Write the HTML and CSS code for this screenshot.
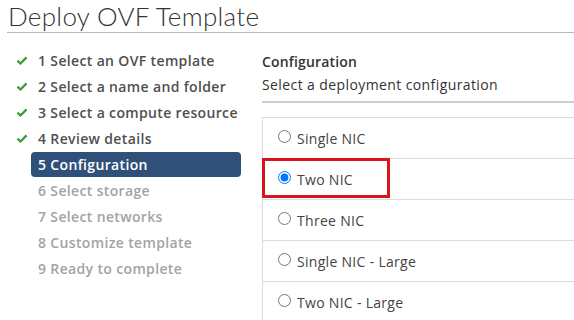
FILE: index.html
```html
<!DOCTYPE html>
<html lang="en">
<head>
  <meta charset="UTF-8" />
  <meta name="viewport" content="width=device-width, initial-scale=1.0" />
  <title>Deploy OVF Template</title>
  <link rel="stylesheet" href="styles.css">
</head>
<body>

  <div class="page">
    <h1 class="title">Deploy OVF Template</h1>

    <div class="wizard">
      <ul class="steps">
        <li class="step done">
          <svg class="check" viewBox="0 0 12 10"><path d="M1 5.2 L4.3 8.3 L11 1.5" /></svg>
          <span class="step-label">1 Select an OVF template</span>
        </li>
        <li class="step done">
          <svg class="check" viewBox="0 0 12 10"><path d="M1 5.2 L4.3 8.3 L11 1.5" /></svg>
          <span class="step-label">2 Select a name and folder</span>
        </li>
        <li class="step done">
          <svg class="check" viewBox="0 0 12 10"><path d="M1 5.2 L4.3 8.3 L11 1.5" /></svg>
          <span class="step-label">3 Select a compute resource</span>
        </li>
        <li class="step done">
          <svg class="check" viewBox="0 0 12 10"><path d="M1 5.2 L4.3 8.3 L11 1.5" /></svg>
          <span class="step-label">4 Review details</span>
        </li>
        <li class="step current">
          <span class="step-label">5 Configuration</span>
        </li>
        <li class="step">
          <span class="step-label">6 Select storage</span>
        </li>
        <li class="step">
          <span class="step-label">7 Select networks</span>
        </li>
        <li class="step">
          <span class="step-label">8 Customize template</span>
        </li>
        <li class="step">
          <span class="step-label">9 Ready to complete</span>
        </li>
      </ul>

      <div class="content">
        <h2 class="content-title">Configuration</h2>
        <p class="content-sub">Select a deployment configuration</p>

        <div class="options">
          <label class="option">
            <input type="radio" name="config">
            <span>Single NIC</span>
          </label>
          <label class="option">
            <input type="radio" name="config" checked>
            <span>Two NIC</span>
            <span class="marker"></span>
          </label>
          <label class="option">
            <input type="radio" name="config">
            <span>Three NIC</span>
          </label>
          <label class="option">
            <input type="radio" name="config">
            <span>Single NIC - Large</span>
          </label>
          <label class="option">
            <input type="radio" name="config">
            <span>Two NIC - Large</span>
          </label>
        </div>
      </div>
    </div>
  </div>

</body>
</html>
```

FILE: styles.css
```css
html, body {
  margin: 0;
  padding: 0;
  overflow: hidden;
}

body {
  font-family: "Open Sans", Arial, sans-serif;
  background: #fff;
  color: #565656;
}

.page {
  padding-left: 7px;
}

.title {
  margin: 0;
  padding: 0 0 0 1px;
  height: 32px;
  font-family: Lato, "Open Sans", sans-serif;
  font-size: 26px;
  font-weight: 300;
  line-height: 32px;
  letter-spacing: 0.3px;
  color: #333;
  white-space: nowrap;
  border-bottom: 1px solid #b8b8b8;
}

.wizard {
  display: flex;
  padding-top: 14px;
}

/* Steps */
.steps {
  list-style: none;
  margin: 0;
  padding: 0;
  width: 234px;
  margin-right: 21px;
  flex-shrink: 0;
}

.step {
  display: flex;
  align-items: center;
  height: 26px;
  padding-left: 24px;
  position: relative;
  font-size: 14px;
  font-weight: 600;
  letter-spacing: 0.35px;
  color: #a3a3a3;
}

.step.done {
  color: #4f4f4f;
}

.check {
  position: absolute;
  left: 9px;
  top: 9px;
  width: 12px;
  height: 9px;
  fill: none;
  stroke: #3d9a3a;
  stroke-width: 2.5;
}

.step-label {
  flex: 1;
  height: 25px;
  line-height: 25px;
  padding: 0 7px;
  border-radius: 4px;
  white-space: nowrap;
}

.step.current .step-label {
  background: #2f5179;
  color: #fff;
}

/* Content */
.content {
  flex: 1;
  min-width: 0;
}

.content-title {
  margin: 5px 0 0;
  font-size: 14px;
  font-weight: 600;
  line-height: 20px;
  letter-spacing: 0.15px;
  color: #333;
}

.content-sub {
  margin: 3px 0 0;
  font-size: 14px;
  line-height: 20px;
  letter-spacing: 0.4px;
  color: #333;
  padding-bottom: 6px;
  border-bottom: 2px solid #cfcfcf;
}

.options {
  margin-top: 14px;
  border-left: 1px solid #dcdcdc;
  border-top: 1px solid #dcdcdc;
}

.option {
  display: flex;
  align-items: center;
  height: 40px;
  padding-left: 15px;
  border-bottom: 1px solid #dcdcdc;
  font-size: 14px;
  letter-spacing: 0.3px;
  color: #444;
  position: relative;
}

.option input {
  margin: 0 6px 4px 0;
  width: 13px;
  height: 13px;
}

/* red highlight drawn over the selected row */
.marker {
  position: absolute;
  left: -1px;
  top: -1px;
  width: 122px;
  height: 34px;
  border: 3px solid #d8141c;
}
```
